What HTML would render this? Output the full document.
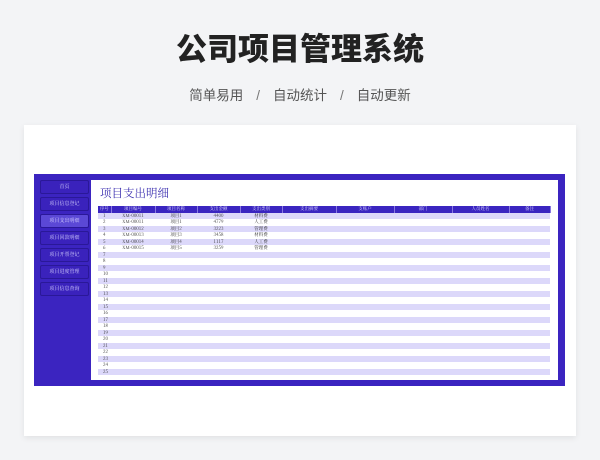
<!DOCTYPE html>
<html><head><meta charset="utf-8"><style>
*{margin:0;padding:0;box-sizing:border-box}
body{width:600px;height:460px;background:#f3f4f6;font-family:"Liberation Sans","Noto Sans CJK SC",sans-serif;position:relative;overflow:hidden}
.t{position:absolute;left:0;width:600px;top:24px;text-align:center;font-size:31px;font-weight:900;color:#222}
.s{position:absolute;left:0;width:600px;top:84px;text-align:center;font-size:13.5px;color:#555}
.s span{margin:0 13px;color:#777}
.card{position:absolute;left:24px;top:125px;width:552px;height:311px;background:#fff;box-shadow:0 2px 6px rgba(0,0,0,.08)}
.frame{position:absolute;left:34px;top:174px;width:531px;height:212px;background:#3b24c0}
.nav{position:absolute;left:40px;width:49px;height:14px;border:1px solid #2a1898;border-radius:2px;background:#3a22bc;color:#d8d4ff;font-size:5px;text-align:center;line-height:12px;font-family:"Noto Serif CJK SC",serif}
.nav.a{background:#5b48d6}
.panel{position:absolute;left:91px;top:180px;width:467px;height:200px;background:#fff}
.ttl{position:absolute;left:100px;top:185px;font-size:11.5px;color:#3b2fb0;font-family:"Noto Serif CJK SC",serif}
table{position:absolute;left:98px;top:206px;width:452px;border-collapse:collapse;table-layout:fixed;font-family:"Noto Serif CJK SC",serif;font-size:4.5px;color:#333}
td,th{height:6.5px;padding:0;line-height:6px;overflow:hidden;white-space:nowrap}
th{background:#3a25c0;color:#dcd8ff;font-weight:normal;border-right:1px solid #8878e0;text-align:center}
td{text-align:center}
td:first-child{text-align:left;padding-left:5px}
tr:nth-child(even) td{background:#dcd8fa}
</style></head><body>
<div class="t">公司项目管理系统</div>
<div class="s">简单易用<span>/</span>自动统计<span>/</span>自动更新</div>
<div class="card"></div>
<div class="frame"></div>
<div class="nav" style="top:180px">首页</div>
<div class="nav" style="top:197px">项目信息登记</div>
<div class="nav a" style="top:214px">项目支出明细</div>
<div class="nav" style="top:231px">项目回款明细</div>
<div class="nav" style="top:248px">项目开票登记</div>
<div class="nav" style="top:265px">项目进度管理</div>
<div class="nav" style="top:282px">项目信息查询</div>
<div class="panel"></div>
<div class="ttl">项目支出明细</div>
<table>
<colgroup><col style="width:13px"><col style="width:44px"><col style="width:42px"><col style="width:43px"><col style="width:42px"><col style="width:54px"><col style="width:58px"><col style="width:58px"><col style="width:57px"><col style="width:41px"></colgroup>
<tr><th>序号</th><th>项目编号</th><th>项目名称</th><th>支出金额</th><th>支出类别</th><th>支出摘要</th><th>支账户</th><th>部门</th><th>人员姓名</th><th>备注</th></tr>
<tr><td>1</td><td>XM-00011</td><td>项目1</td><td>4400</td><td>材料费</td><td></td><td></td><td></td><td></td><td></td></tr>
<tr><td>2</td><td>XM-00011</td><td>项目1</td><td>4779</td><td>人工费</td><td></td><td></td><td></td><td></td><td></td></tr>
<tr><td>3</td><td>XM-00012</td><td>项目2</td><td>3223</td><td>管理费</td><td></td><td></td><td></td><td></td><td></td></tr>
<tr><td>4</td><td>XM-00013</td><td>项目3</td><td>3458</td><td>材料费</td><td></td><td></td><td></td><td></td><td></td></tr>
<tr><td>5</td><td>XM-00014</td><td>项目4</td><td>1117</td><td>人工费</td><td></td><td></td><td></td><td></td><td></td></tr>
<tr><td>6</td><td>XM-00015</td><td>项目5</td><td>3259</td><td>管理费</td><td></td><td></td><td></td><td></td><td></td></tr>
<tr><td>7</td><td></td><td></td><td></td><td></td><td></td><td></td><td></td><td></td><td></td></tr>
<tr><td>8</td><td></td><td></td><td></td><td></td><td></td><td></td><td></td><td></td><td></td></tr>
<tr><td>9</td><td></td><td></td><td></td><td></td><td></td><td></td><td></td><td></td><td></td></tr>
<tr><td>10</td><td></td><td></td><td></td><td></td><td></td><td></td><td></td><td></td><td></td></tr>
<tr><td>11</td><td></td><td></td><td></td><td></td><td></td><td></td><td></td><td></td><td></td></tr>
<tr><td>12</td><td></td><td></td><td></td><td></td><td></td><td></td><td></td><td></td><td></td></tr>
<tr><td>13</td><td></td><td></td><td></td><td></td><td></td><td></td><td></td><td></td><td></td></tr>
<tr><td>14</td><td></td><td></td><td></td><td></td><td></td><td></td><td></td><td></td><td></td></tr>
<tr><td>15</td><td></td><td></td><td></td><td></td><td></td><td></td><td></td><td></td><td></td></tr>
<tr><td>16</td><td></td><td></td><td></td><td></td><td></td><td></td><td></td><td></td><td></td></tr>
<tr><td>17</td><td></td><td></td><td></td><td></td><td></td><td></td><td></td><td></td><td></td></tr>
<tr><td>18</td><td></td><td></td><td></td><td></td><td></td><td></td><td></td><td></td><td></td></tr>
<tr><td>19</td><td></td><td></td><td></td><td></td><td></td><td></td><td></td><td></td><td></td></tr>
<tr><td>20</td><td></td><td></td><td></td><td></td><td></td><td></td><td></td><td></td><td></td></tr>
<tr><td>21</td><td></td><td></td><td></td><td></td><td></td><td></td><td></td><td></td><td></td></tr>
<tr><td>22</td><td></td><td></td><td></td><td></td><td></td><td></td><td></td><td></td><td></td></tr>
<tr><td>23</td><td></td><td></td><td></td><td></td><td></td><td></td><td></td><td></td><td></td></tr>
<tr><td>24</td><td></td><td></td><td></td><td></td><td></td><td></td><td></td><td></td><td></td></tr>
<tr><td>25</td><td></td><td></td><td></td><td></td><td></td><td></td><td></td><td></td><td></td></tr>
</table>
</body></html>
